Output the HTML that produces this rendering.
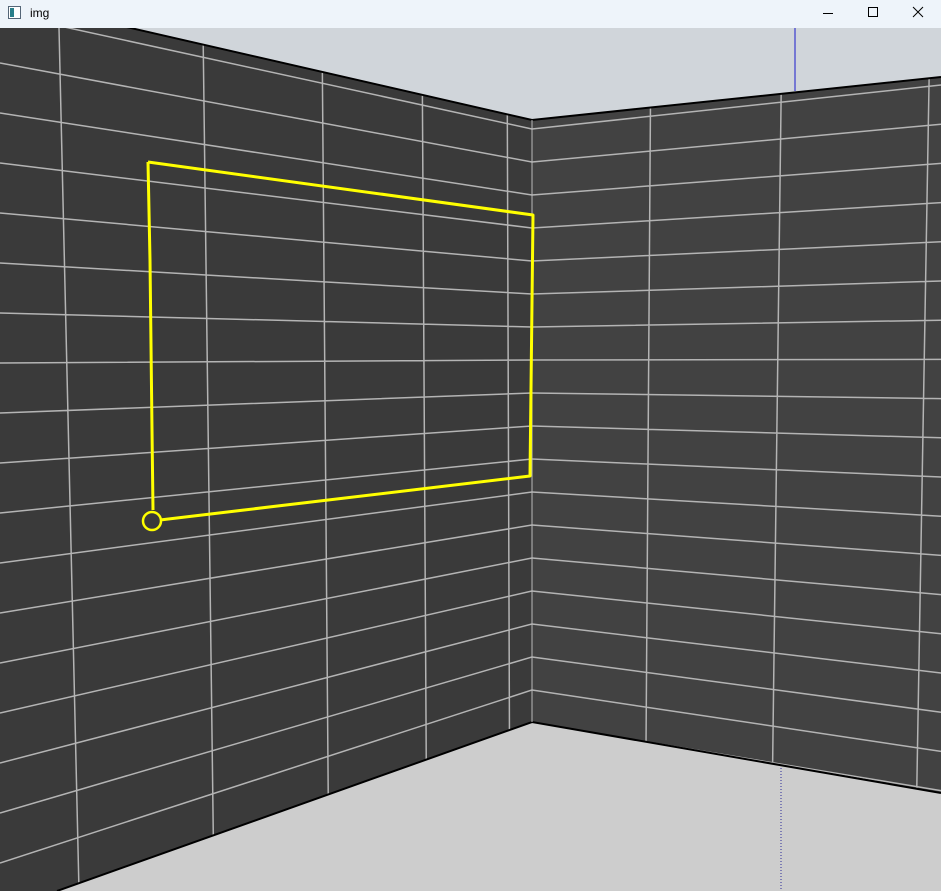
<!DOCTYPE html>
<html><head><meta charset="utf-8"><style>
html,body{margin:0;padding:0;width:941px;height:891px;overflow:hidden;background:#3a3a3a}
#tb{position:absolute;left:0;top:0;width:941px;height:28px;background:#eef4fa;font-family:"Liberation Sans",sans-serif;font-size:12px;color:#000}
svg{position:absolute;left:0;top:0}
</style></head><body>
<svg width="941" height="891" viewBox="0 0 941 891">
<defs>
<clipPath id="lw"><polygon points="0,-2 532,120 532,722 57,891 0,891"/></clipPath>
<clipPath id="rw"><polygon points="532,120 941,77 941,793 532,722"/></clipPath>
</defs>
<polygon points="0,-2 532,120 532,722 57,891 0,891" fill="#3a3a3a"/>
<polygon points="532,120 941,77 941,793 532,722" fill="#424242"/>
<g clip-path="url(#lw)" stroke="#b4b4b4" stroke-width="1.5" fill="none">
<path id="lh" d=""/>
</g>
<g clip-path="url(#rw)" stroke="#b4b4b4" stroke-width="1.5" fill="none">
<path id="rh" d=""/>
</g>
<polygon points="0,0 941,0 941,77 532,120 0,-2" fill="#d0d5da"/>
<polygon points="57,891 532,722 941,793 941,891" fill="#cdcdcd"/>
<g stroke="#000" stroke-width="2" fill="none">
<polyline points="0,-2 532,120 941,77"/>
<polyline points="57,891 532,722 941,793"/>
</g>
<line x1="532" y1="120" x2="532" y2="722" stroke="#bbb" stroke-width="1"/>
<line x1="795" y1="28" x2="795" y2="91" stroke="#1a1acc" stroke-width="1"/>
<line x1="781" y1="768" x2="781" y2="891" stroke="#2a2a99" stroke-width="1" stroke-dasharray="1,2"/>
<g stroke="#ffff00" stroke-width="3" fill="none" stroke-linejoin="round">
<polyline points="148,162 533,215 530,476 160,520"/>
<polyline points="148,162 150,260 151,345 152,430 153,510"/>
<circle cx="152" cy="521" r="9" stroke-width="2.5"/>
</g>
</svg>
<div id="tb">
<svg width="941" height="28" style="position:absolute;left:0;top:0">
<rect x="8.5" y="6.5" width="12" height="12" fill="#fff" stroke="#567" stroke-width="1"/>
<rect x="10" y="8" width="4" height="9" fill="#2a7f8a"/>
<line x1="823" y1="13.5" x2="833" y2="13.5" stroke="#000" stroke-width="1"/>
<rect x="868.5" y="7.5" width="9" height="9" fill="none" stroke="#000" stroke-width="1"/>
<path d="M913 7 L923 17 M923 7 L913 17" stroke="#000" stroke-width="1"/>
</svg>
<span style="position:absolute;left:30px;top:6px">img</span>
</div>
<script>
var l="",r="";
for(var k=0;k<22;k++){
 var y0=13+50*k, y1=129+33*k;
 l+="M0 "+y0+" L532 "+y1+" ";
 var y2=85+39.2*k;
 r+="M532 "+y1+" L941 "+y2+" ";
}
var lv=[[59,79],[203,214],[322,329],[422,427],[507,510]];
lv.forEach(function(v){l+="M"+v[0]+" 28 L"+v[1]+" 891 ";});
var rv=[[651,645],[782,771],[930,915]];
rv.forEach(function(v){r+="M"+v[0]+" 28 L"+v[1]+" 891 ";});
document.getElementById("lh").setAttribute("d",l);
document.getElementById("rh").setAttribute("d",r);
</script>
</body></html>
